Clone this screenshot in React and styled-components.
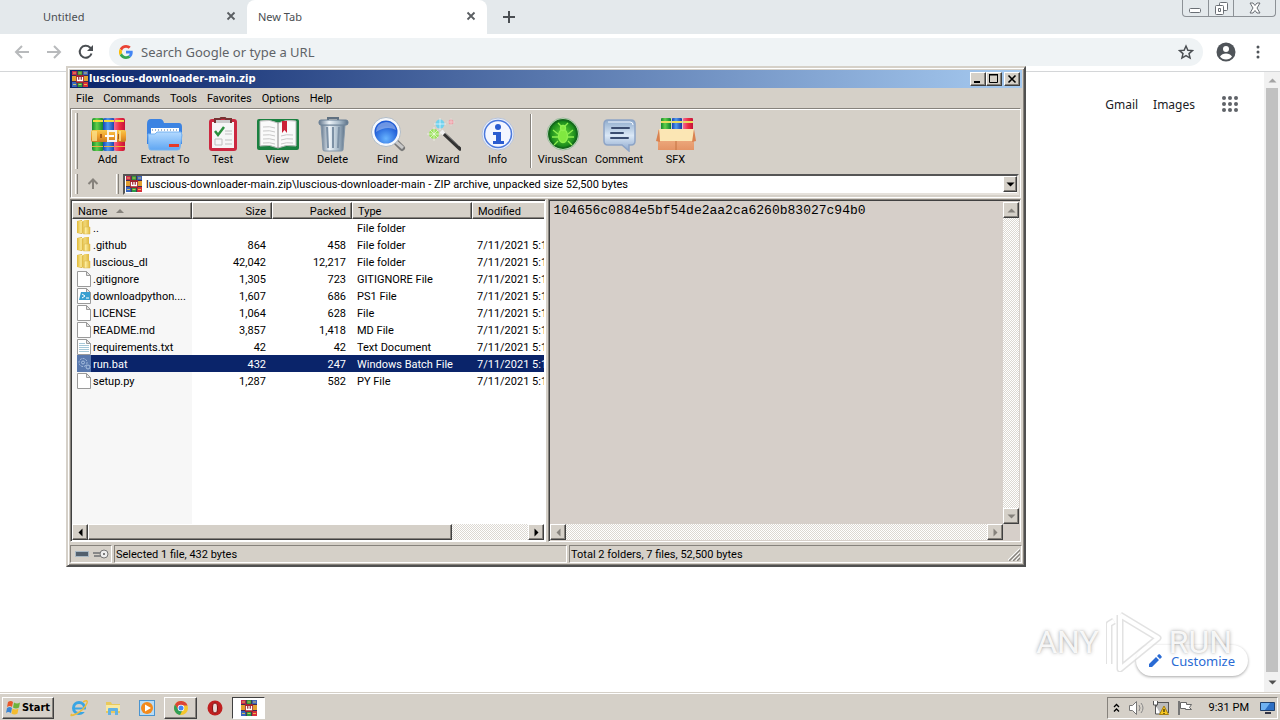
import React from "react";
import styled, { createGlobalStyle, css } from "styled-components";

const FACE = "#d5d0c8";
const UI = `Roboto, "Liberation Sans", sans-serif`;
const WEB = `"Noto Sans", "Open Sans", sans-serif`;
const BOLD = `"DejaVu Sans Condensed", Roboto, sans-serif`;

const GlobalStyle = createGlobalStyle`
  * { box-sizing: border-box; }
  html, body, #root { height: 100%; }
  body { margin: 0; overflow: hidden; background: #fff; font-family: ${UI}; font-size: 11px; color: #000; }
  button { margin: 0; padding: 0; border: 0; background: none; font: inherit; color: inherit; display: flex; align-items: center; justify-content: center; }
  svg { display: block; flex: none; }
`;

const raised = css`
  background: ${FACE};
  border: 1px solid;
  border-color: #fff #404040 #404040 #fff;
  box-shadow: inset -1px -1px 0 #86827c;
`;
const sunken = css`
  border: 1px solid;
  border-color: #86827c #fff #fff #86827c;
`;

const Screen = styled.div`
  position: relative;
  display: flex;
  flex-direction: column;
  height: 100%;
  min-height: 600px;
`;

/* ---------- browser ---------- */
const TabStrip = styled.header`
  display: flex;
  height: 34px;
  background: #e4e9ec;
`;
const Tab = styled.div`
  display: flex;
  align-items: center;
  justify-content: space-between;
  width: ${(p) => (p.$active ? 240 : 247)}px;
  padding: 0 11px 2px ${(p) => (p.$active ? 11 : 43)}px;
  border-radius: 8px 8px 0 0;
  background: ${(p) => (p.$active ? "#fff" : "transparent")};
  font-family: ${WEB};
  font-size: 11px;
  color: #4a4e52;
`;
const NewTab = styled.button`
  width: 44px;
`;
const Caption = styled.div`
  display: flex;
  align-self: flex-start;
  height: 17px;
  margin: 0 4px 0 auto;
  border: 1px solid #8c9196;
  border-top: 0;
  border-radius: 0 0 4px 4px;
`;
const CaptionButton = styled.button`
  width: ${(p) => (p.$wide ? 42 : 25)}px;
  & + & { border-left: 1px solid #8c9196; }
`;
const BrowserBar = styled.div`
  display: flex;
  align-items: center;
  height: 38px;
  padding: 0 12px 2px 6px;
  border-bottom: 1px solid #d4d6d8;
`;
const NavButton = styled.button`
  width: 32px;
  height: 28px;
  margin-right: ${(p) => (p.$last ? 7 : 0)}px;
`;
const Omnibox = styled.label`
  display: flex;
  flex: 1;
  align-items: center;
  height: 28px;
  padding: 0 9px 0 10px;
  border-radius: 14px;
  background: #eff3f5;
`;
const OmniInput = styled.input`
  flex: 1;
  height: 24px;
  padding: 0 8px;
  border: 0;
  outline: 0;
  background: none;
  font-family: ${WEB};
  font-size: 13px;
  &::placeholder { color: #5f6368; opacity: 1; }
`;
const BarAction = styled.button`
  width: ${(p) => (p.$slim ? 20 : 45)}px;
  height: 28px;
`;
const Page = styled.main`
  display: flex;
  flex: 1;
  justify-content: flex-end;
  min-height: 0;
`;
const PageLinks = styled.nav`
  display: flex;
  align-items: center;
  gap: 15px;
  height: 40px;
  margin: 12px 25px 0 0;
  font-family: ${WEB};
  font-size: 12px;
  a { color: #202124; text-decoration: none; }
  button { margin-left: 11px; }
`;
const PageScroll = styled.div`
  display: flex;
  flex-direction: column;
  width: 16px;
  background: #f1f1f1;
`;
const PageScrollButton = styled.button`
  height: 16px;
  margin-bottom: ${(p) => (p.$end ? 2 : 0)}px;
`;
const PageThumb = styled.div`
  flex: 1;
  margin: 0 2px 2px;
  background: #c1c1c1;
`;
const Customize = styled.button`
  position: absolute;
  right: 32px;
  bottom: 44px;
  gap: 9px;
  width: 112px;
  height: 31px;
  border-radius: 16px;
  background: #fff;
  box-shadow: 0 1px 3px rgba(0, 0, 0, 0.35);
  color: #2a6bd4;
  font-family: ${WEB};
  font-size: 13px;
`;
const Watermark = styled.div`
  position: absolute;
  right: 48px;
  bottom: 48px;
  display: flex;
  align-items: center;
  gap: 7px;
  pointer-events: none;
  font-family: Roboto, sans-serif;
  font-size: 32px;
  line-height: 60px;
  color: rgba(255, 255, 255, 0.9);
  text-shadow: 0 0 4px rgba(0, 0, 0, 0.3), 0 0 2px rgba(0, 0, 0, 0.15);
`;

/* ---------- archive window ---------- */
const Window = styled.section`
  position: absolute;
  top: 66px;
  left: 66px;
  bottom: 153px;
  width: 75%;
  display: flex;
  flex-direction: column;
  padding: 2px;
  background: ${FACE};
  border: 2px solid;
  border-color: #d5d0c8 #505050 #505050 #d5d0c8;
  box-shadow: inset 1px 1px 0 #fff, inset -1px -1px 0 #86827c;
`;
const TitleBar = styled.header`
  display: flex;
  align-items: center;
  height: 18px;
  padding: 0 2px;
  background: linear-gradient(90deg, #0a246a, #a6caf0);
  color: #fff;
`;
const Title = styled.h1`
  flex: 1;
  margin: 0 0 0 1px;
  font-family: ${BOLD};
  font-size: 11px;
  line-height: 18px;
  font-weight: 700;
`;
const TitleButton = styled.button`
  ${raised}
  width: 16px;
  height: 14px;
  margin-left: ${(p) => (p.$gap ? 2 : 0)}px;
`;
const MenuBar = styled.nav`
  display: flex;
  gap: 10px;
  height: 20px;
  padding: 2px 0 0 6px;
  line-height: 18px;
`;
const Tools = styled.div`
  display: flex;
  flex-direction: column;
  height: 90px;
  margin-right: 1px;
  border: 1px solid #fff;
  border-left-color: #86827c;
  border-top-color: #86827c;
  box-shadow: inset 1px 1px 0 #fff;
`;
const ToolRow = styled.div`
  display: flex;
  align-items: center;
  height: ${(p) => (p.$small ? 26 : 62)}px;
  padding: ${(p) => (p.$small ? "0 1px 0 4px" : "2px 0 0 4px")};
`;
const Grip = styled.i`
  width: 3px;
  height: ${(p) => (p.$small ? 20 : 56)}px;
  border-left: 1px solid #fff;
  border-right: 1px solid #86827c;
`;
const Divider = styled.i`
  width: 10px;
  height: 54px;
  background: linear-gradient(#86827c, #86827c) 5px 0 / 1px 100% no-repeat, linear-gradient(#fff, #fff) 6px 0 / 1px 100% no-repeat;
`;
const ToolButton = styled.button`
  flex-direction: column;
  width: ${(p) => p.$w || 55}px;
  line-height: 14px;
  white-space: nowrap;
  svg { margin-bottom: 1px; }
  ${Grip} + & { margin-left: 2px; }
`;
const UpButton = styled.button`
  width: 30px;
  height: 22px;
  margin-right: 8px;
`;
const Address = styled.label`
  display: flex;
  flex: 1;
  align-items: center;
  height: 21px;
  margin-left: 4px;
  padding: 0 0 0 1px;
  background: #fff;
  border: 2px solid;
  border-color: #555 #e6e2dc #e6e2dc #555;
  input { flex: 1; height: 17px; padding: 1px 4px 0; border: 0; outline: 0; font: inherit; background: none; }
`;
const DropButton = styled.button`
  ${raised}
  width: 14px;
  height: 16px;
`;
const Panes = styled.div`
  display: grid;
  grid-template-columns: minmax(0, 477fr) minmax(0, 473fr);
  gap: 2px;
  flex: 1;
  min-height: 0;
  margin: 1px 1px 0 0;
`;
const Pane = styled.div`
  display: flex;
  flex-direction: column;
  min-height: 0;
  overflow: hidden;
  border: 1px solid;
  border-color: #86827c #fff #fff #86827c;
  box-shadow: inset 1px 1px 0 #404040;
  padding: 2px 1px 1px;
  background: ${(p) => (p.$face ? "#d6cfc9" : "#fff")};
`;
const List = styled.div`
  flex: 1;
  min-height: 0;
  overflow: hidden;
  background: linear-gradient(90deg, #f7f7f7 120px, #fff 120px);
`;
const Table = styled.table`
  width: 520px;
  table-layout: fixed;
  border-collapse: separate;
  border-spacing: 0;
  th { ${raised} height: 17px; padding: 2px 5px 0; font-weight: 400; text-align: left; line-height: 13px; }
  td { height: 17px; padding: 2px 5px 0; line-height: 15px; white-space: nowrap; overflow: hidden; }
  th.num, td.num { text-align: right; }
  td.num { padding-right: 6px; }
  td:first-child { padding: 0 0 0 5px; }
`;
const Row = styled.tr`
  ${(p) => p.$selected && css`
    color: #fff;
    td { background: #0a246a; }
    td:first-child { background: #f7f7f7; }
  `}
`;
const NameCell = styled.div`
  display: flex;
  height: 17px;
  align-items: center;
  span { flex: 1; height: 17px; padding: 2px 0 0 2px; ${(p) => p.$selected && "background: #0a246a;"} }
`;
const SortMark = styled.svg`
  display: inline-block;
  margin-left: 9px;
  vertical-align: 2px;
`;
const PreviewBody = styled.div`
  display: flex;
  flex: 1;
  min-height: 0;
`;
const Preview = styled.pre`
  flex: 1;
  margin: 0;
  padding: 1px 3px;
  font: 13px/16px "Liberation Mono", monospace;
`;
const Bar = styled.div`
  display: flex;
  flex: none;
  justify-content: ${(p) => (p.$thumb ? "flex-start" : "space-between")};
  flex-direction: ${(p) => (p.$vertical ? "column" : "row")};
  height: ${(p) => (p.$vertical ? "auto" : "16px")};
  width: ${(p) => (p.$vertical ? "16px" : "auto")};
  margin-right: ${(p) => (p.$corner ? 16 : 0)}px;
  background: repeating-conic-gradient(#fff 0 25%, #dcd8d1 0 50%) 0 0 / 2px 2px;
  button:last-child { margin-left: ${(p) => (p.$thumb ? "auto" : "0")}; }
`;
const BarButton = styled.button`
  ${raised}
  width: 16px;
  height: 16px;
  color: ${(p) => (p.$off ? "#86827c" : "#000")};
`;
const BarThumb = styled.div`
  ${raised}
  width: 77%;
`;
const StatusBar = styled.footer`
  display: flex;
  gap: 2px;
  height: 21px;
  padding-top: 3px;
  line-height: 17px;
`;
const StatusCell = styled.div`
  ${sunken}
  display: flex;
  align-items: center;
  justify-content: ${(p) => (p.$end ? "space-between" : "flex-start")};
  gap: 2px;
  flex: ${(p) => p.$flex || "none"};
  padding: 0 1px;
`;

/* ---------- taskbar ---------- */
const Taskbar = styled.footer`
  display: flex;
  align-items: center;
  gap: 1px;
  height: 28px;
  padding: 2px 2px 0;
  background: ${FACE};
  border-top: 1px solid #d5d0c8;
  box-shadow: inset 0 1px 0 #fff;
`;
const Start = styled.button`
  ${raised}
  gap: 1px;
  width: 52px;
  height: 22px;
  margin-right: 7px;
  font-family: ${BOLD};
  font-size: 11px;
  font-weight: 700;
`;
const TaskButton = styled.button`
  width: 33px;
  height: 22px;
  ${(p) => p.$raised && raised}
  ${(p) => p.$pressed && css`background: #fff; border: 1px solid; border-color: #404040 #fff #fff #404040;`}
`;
const Tray = styled.div`
  ${sunken}
  display: flex;
  align-items: center;
  gap: 6px;
  height: 22px;
  margin-left: auto;
  padding: 0 1px 0 5px;
  svg:first-child { margin-right: 2px; }
  time { margin: 0 4px 0 9px; }
`;

/* ---------- drawings ---------- */
const Books = ({ size = 16 }) => (
  <svg width={size} height={size} viewBox="0 0 16 16">
    <path fill="#8e2c5c" d="M0 0h16v16H0z" />
    <path fill="#c8284c" d="M0 0h5v4H0z" /><path fill="#35963c" d="M5.500 0h5v4h-5z" /><path fill="#e02c34" d="M11 0h5v4h-5z" />
    <path fill="#e2a030" d="M0 5h4v5H0zM12 5h4v5h-4z" />
    <path fill="#2e6cc8" d="M0 11h5v5H0zM11 0h5v4h-5z" opacity=".9" /><path fill="#2a9a44" d="M5.500 11h5v5h-5z" /><path fill="#d83038" d="M11 11h5v5h-5z" />
    <path fill="#a0242e" d="M4 4h8v8H4z" />
    <path stroke="#fff" strokeWidth="1.300" fill="none" d="M5.500 6v3.500h5V6M8 6v3.500" />
    <path stroke="#2a2a50" strokeWidth=".8" fill="none" d="M5.200 0v4M10.700 0v4M5.200 12v4M10.700 12v4M0 4.500h4M12 4.500h4M0 10.500h4M12 10.500h4" />
    <path stroke="#f3d552" strokeWidth=".8" d="M1 2h3M6.500 2h3M12 2h3M1 13.500h3M6.500 13.500h3M12 13.500h3" />
  </svg>
);

const Defs = () => (
  <svg width="0" height="0" style={{ position: "absolute" }} aria-hidden="true">
    <defs>
      <linearGradient id="red"><stop stopColor="#f06a9a" /><stop offset=".5" stopColor="#ee2d40" /><stop offset="1" stopColor="#c4123a" /></linearGradient>
      <linearGradient id="green"><stop stopColor="#128a2c" /><stop offset=".4" stopColor="#63cf4a" /><stop offset="1" stopColor="#078030" /></linearGradient>
      <linearGradient id="blue"><stop stopColor="#1742b4" /><stop offset=".4" stopColor="#4f9aee" /><stop offset="1" stopColor="#1638a4" /></linearGradient>
      <linearGradient id="gold" x2="0" y2="1"><stop stopColor="#f8c94c" /><stop offset=".5" stopColor="#f0a02c" /><stop offset="1" stopColor="#c87a20" /></linearGradient>
      <linearGradient id="sky" x2="0" y2="1"><stop stopColor="#b4daff" /><stop offset="1" stopColor="#5fa6f2" /></linearGradient>
      <linearGradient id="steel"><stop stopColor="#64788e" /><stop offset=".35" stopColor="#eef4f9" /><stop offset=".7" stopColor="#a9bbca" /><stop offset="1" stopColor="#5d7288" /></linearGradient>
      <radialGradient id="lens" cy=".75"><stop stopColor="#68b4ff" /><stop offset="1" stopColor="#1f5cd6" /></radialGradient>
      <radialGradient id="virus"><stop stopColor="#69dd38" /><stop offset="1" stopColor="#108018" /></radialGradient>
      <linearGradient id="note" x2="0" y2="1"><stop stopColor="#8faccd" /><stop offset=".5" stopColor="#dbe8f6" /><stop offset="1" stopColor="#8ba7cd" /></linearGradient>
      <linearGradient id="box" x2="0" y2="1"><stop stopColor="#f4bb92" /><stop offset="1" stopColor="#e49466" /></linearGradient>
      <linearGradient id="folder"><stop stopColor="#e0b938" /><stop offset=".4" stopColor="#fff0a0" /><stop offset="1" stopColor="#dfb840" /></linearGradient>
    </defs>
  </svg>
);

const Pic = ({ children, w = 36 }) => <svg width={w} height="36" viewBox={`0 0 ${w} 36`}>{children}</svg>;

const pics = {
  Add: <Pic>
    <rect x="2" y="2" width="12" height="33" rx="2" fill="url(#green)" />
    <rect x="13" y="2" width="12" height="33" rx="2" fill="url(#blue)" />
    <rect x="24" y="2" width="11" height="33" rx="2" fill="url(#red)" />
    <path fill="#f6dc40" d="M3 4h10v2H3zM14 4h10v2H14zM25 4h9v2h-9z" />
    <path fill="#e8b040" d="M2 30h11v1H2zM14 30h10v1H14zM25 30h10v1H25z" />
    <rect x="1" y="14" width="35" height="12" rx="2" fill="url(#gold)" />
    <path fill="#fbe08a" d="M2 15h5v10H2zM29 15h2v10h-2z" opacity=".8" />
    <path fill="none" stroke="#f8f4ec" strokeWidth="2" d="M18 15h8v10h-8z" /><path stroke="#fff" strokeWidth="2" d="M15 20h9" />
    <path fill="#a65a18" d="M10 18h2v4h-2zM28 18h1v5h-1z" />
  </Pic>,
  "Extract To": <Pic>
    <path fill="#3c83e2" d="M0 8q0-5 4-5h9q3 0 4 4h15q3 0 3 4v17H0z" />
    <path fill="#fff" d="M4 12h28v14H4z" /><path stroke="#9fb6d0" strokeWidth="2" strokeDasharray="1 2" d="M5 14h27" />
    <path fill="url(#sky)" stroke="#74b2f2" d="M1 18h7l2-2h24l1 3-2 13q0 2-3 2H4q-2 0-2-2z" />
    <rect x="22" y="28" width="10" height="3" fill="#e63a28" />
  </Pic>,
  Test: <Pic>
    <rect x="4" y="3" width="28" height="32" rx="3" fill="#cc2840" /><path fill="#f6f6f6" d="M7 6h22v26H7z" />
    <path fill="none" stroke="#733" strokeWidth="2" d="M10 6V3h5l1-1h4l1 1h5v3z" /><path fill="#ccc" d="M11 4h14v3H11z" />
    <path fill="none" stroke="#2b8f3d" strokeWidth="2.500" d="m10 15 3 4 6-8" />
    <path fill="none" stroke="#c0c0c0" d="M10 23h7v6h-7zM20 15h7M20 18h7M20 24h7M20 28h7" />
  </Pic>,
  View: <Pic w={44}>
    <rect x="1" y="3" width="42" height="31" rx="2" fill="#1a8040" />
    <path fill="#fafafa" stroke="#bbb" d="M4 5q10-2 18 2 8-4 18-2v25q-10-2-18 2-8-4-18-2z" />
    <path stroke="#888" d="M22 7v25" /><path fill="none" stroke="#c8c8c8" d="M7 11q7-1 12 1M7 15q7-1 12 1M7 19q7-1 12 1M7 23q7-1 12 1M7 27q7-1 12 1M25 20q5-2 12-1M25 24q5-2 12-1M25 28q5-2 12-1" />
    <path fill="#cc2036" d="M26 5h5v12l-2.500-3-2.500 3z" />
  </Pic>,
  Delete: <Pic>
    <path fill="none" stroke="#607080" strokeWidth="2" d="M13 4V2h10v2" />
    <path fill="url(#steel)" stroke="#8496a8" d="M6 9h24l-2 25q0 1-2 1H10q-2 0-2-1z" />
    <rect x="4" y="4" width="29" height="5" rx="2" fill="url(#steel)" stroke="#6b8096" />
    <path stroke="#7d91a6" strokeWidth="2" d="M12 11l1 21M18 11v21M24 11l-1 21" />
  </Pic>,
  Find: <Pic>
    <path stroke="#777" strokeWidth="6" strokeLinecap="round" d="m27 27 5 5" /><path stroke="#c8c8c8" strokeWidth="3" d="m25 25 8 7" />
    <circle cx="16" cy="16" r="13" fill="url(#lens)" stroke="#f6f8fc" strokeWidth="3" />
    <circle cx="16" cy="16" r="14.500" fill="none" stroke="#9ab" strokeWidth=".7" />
    <path fill="#fff" opacity=".35" d="M6 16q0-9 10-10 8 0 10 8-9-5-20 2z" />
  </Pic>,
  Wizard: <Pic>
    <path stroke="#333" strokeWidth="3.500" strokeLinecap="round" d="m18 17 17 16" /><path stroke="#eee" strokeWidth="4" d="m16 15 3 3" />
    <path stroke="#888" d="m20 17 14 13" />
    <g stroke="#f4fae8"><circle cx="9" cy="18" r="5" fill="#9be25c" stroke="none" /><path strokeWidth=".7" d="M9 11v14M2 18h14M5 14l8 8M13 14l-8 8" /></g>
    <g stroke="#f0faff"><circle cx="15" cy="8" r="4.500" fill="#70d2ee" stroke="none" /><path strokeWidth=".7" d="M15 2v12M9 8h12" /></g>
    <g stroke="#f0d8d8"><circle cx="26" cy="6" r="2.500" fill="#f09aa4" stroke="none" /><path strokeWidth=".7" d="M26 2v8M22 6h8" /></g>
  </Pic>,
  Info: <Pic>
    <circle cx="18" cy="18" r="16" fill="#e8eefa" stroke="#b8c4dc" /><circle cx="18" cy="18" r="13.500" fill="#f3f6ff" stroke="#4a78dc" strokeWidth="1.500" />
    <circle cx="18" cy="11" r="3" fill="#2a5cd0" /><path fill="#2a5cd0" d="M13 16h8v9h3v3H13v-3h3v-6h-3z" />
  </Pic>,
  VirusScan: <Pic>
    <circle cx="18" cy="18" r="16" fill="#d8f0d4" stroke="#9ab89a" /><circle cx="18" cy="18" r="14" fill="url(#virus)" stroke="#15691c" strokeWidth="2" />
    <g fill="none" stroke="#8ff050" strokeWidth="1.300"><ellipse cx="18" cy="20" rx="4.500" ry="6.500" fill="#80e840" /><circle cx="18" cy="12" r="2.500" fill="#80e840" /><path d="m13 18-5-4M13 21H7M13 25l-4 4M23 18l5-4M23 21h6M23 25l4 4M16 10l-3-3M20 10l3-3" /></g>
  </Pic>,
  Comment: <Pic>
    <path fill="url(#note)" stroke="#8da4c6" strokeWidth="1.500" d="M7 4h23q4 0 4 4v17q0 4-4 4h-2v6l-7-6H7q-4 0-4-4V8q0-4 4-4z" />
    <path fill="none" stroke="#f4f8ff" d="M7 6h22q3 0 3 3" /><path stroke="#3b4d70" strokeWidth="2" strokeLinecap="round" d="M11 12h17M10 17h12M10 22h17" />
  </Pic>,
  SFX: <Pic w={40}>
    <rect x="5" y="2" width="10" height="16" rx="1" fill="url(#green)" /><rect x="16" y="2" width="10" height="16" rx="1" fill="url(#blue)" /><rect x="27" y="2" width="10" height="16" rx="1" fill="url(#red)" />
    <path fill="#e9dc60" d="M5 5h10v2H5zM16 5h10v2H16zM27 5h10v2H27z" />
    <path fill="url(#box)" d="M2 14h36v20H2z" /><path fill="#fbe6b4" d="M3 13h35l-1 12H4z" />
    <path fill="#d98250" d="m3 13-3 12 4 1zM38 13l2 12-4 1z" /><path stroke="#c47240" d="M20 25v9" />
  </Pic>,
};

const folder = (
  <svg width="14" height="16" viewBox="0 0 14 16">
    <path fill="#d9b23c" d="M0 1l5-1v14l-5-1z" /><path fill="url(#folder)" d="M0 1h6v12H0zM7 0h5v9H7z" /><path fill="url(#folder)" stroke="#d9b54c" strokeWidth=".5" d="m5 2 2-1v13l-2-1zM7 7h6v7H7z" />
  </svg>
);
const Doc = ({ kind }) => (
  <svg width="14" height="16" viewBox="0 0 14 16">
    <path fill="#fff" stroke="#9a9a9a" d="M.5.500h9l4 4v11H.5z" /><path fill="#e4e4e4" stroke="#9a9a9a" d="M9.500.5v4h4z" />
    {kind === "text" && <path stroke="#a6c8d8" d="M2 4.500h6M2 6.500h10M2 8.500h10M2 10.500h10M2 12.500h10" />}
    {kind === "ps" && <><path fill="#3aa0d0" d="M4 4h9v8H2z" /><path fill="none" stroke="#fff" d="m5 6 3 2-3 2M9 10h3" /></>}
  </svg>
);
const gear = (
  <svg width="14" height="17" viewBox="0 0 14 17">
    <path fill="#5878ae" d="M0 0h14v17H0z" /><circle cx="6" cy="7.500" r="4" fill="none" stroke="#a9c0e0" strokeDasharray="2 1" /><circle cx="6" cy="7.500" r="1.500" fill="none" stroke="#a9c0e0" /><circle cx="11" cy="12" r="2" fill="none" stroke="#a9c0e0" />
  </svg>
);

const Arrow = ({ dir = "down", fill = "currentColor" }) => {
  const turn = { down: 0, left: 90, up: 180, right: 270 }[dir];
  return <svg width="9" height="9" viewBox="0 0 9 9"><path fill={fill} d="M.5 2.500h8L4.500 6.500z" transform={`rotate(${turn} 4.500 4.500)`} /></svg>;
};
const Cross = () => (
  <svg width="10" height="10" viewBox="0 0 10 10"><path stroke="#5a5e62" strokeWidth="1.800" d="m1.500 1.500 7 7M8.500 1.500l-7 7" /></svg>
);
const GoogleG = () => (
  <svg width="14" height="14" viewBox="0 0 48 48">
    <path fill="#EA4335" d="M24 9.500c3.500 0 6.700 1.200 9.200 3.600l6.900-6.900C35.900 2.400 30.500 0 24 0 14.600 0 6.500 5.400 2.600 13.200l8 6.200C12.400 13.700 17.700 9.500 24 9.500z" />
    <path fill="#4285F4" d="M47 24.600c0-1.600-.2-3.100-.4-4.600H24v9h12.900c-.6 3-2.300 5.500-4.800 7.200l7.700 6C44.400 38 47 31.800 47 24.600z" />
    <path fill="#FBBC05" d="M10.500 28.600a14.500 14.500 0 0 1 0-9.200l-8-6.200a24 24 0 0 0 0 21.600z" />
    <path fill="#34A853" d="M24 48c6.500 0 11.900-2.100 15.900-5.800l-7.700-6c-2.200 1.500-4.900 2.300-8.200 2.300-6.300 0-11.600-4.200-13.500-9.900l-8 6.200C6.500 42.600 14.600 48 24 48z" />
  </svg>
);

const files = [
  ["..", "", "", "File folder", "", folder],
  [".github", "864", "458", "File folder", 1, folder],
  ["luscious_dl", "42,042", "12,217", "File folder", 1, folder],
  [".gitignore", "1,305", "723", "GITIGNORE File", 1, <Doc />],
  ["downloadpython....", "1,607", "686", "PS1 File", 1, <Doc kind="ps" />],
  ["LICENSE", "1,064", "628", "File", 1, <Doc />],
  ["README.md", "3,857", "1,418", "MD File", 1, <Doc />],
  ["requirements.txt", "42", "42", "Text Document", 1, <Doc kind="text" />],
  ["run.bat", "432", "247", "Windows Batch File", 1, gear],
  ["setup.py", "1,287", "582", "PY File", 1, <Doc />],
];
const widths = { "Extract To": 60, Comment: 58 };
const tool = (name) => <ToolButton key={name} $w={widths[name]}>{pics[name]}{name}</ToolButton>;

function Browser() {
  return (
    <>
      <TabStrip>
        <Tab>Untitled<button aria-label="Close Untitled"><Cross /></button></Tab>
        <Tab $active>New Tab<button aria-label="Close New Tab"><Cross /></button></Tab>
        <NewTab aria-label="New tab"><svg width="12" height="12"><path stroke="#4a4e52" strokeWidth="2" d="M6 0v12M0 6h12" /></svg></NewTab>
        <Caption>
          <CaptionButton aria-label="Minimize"><svg width="13" height="13"><rect x=".5" y="6.500" width="11" height="4" rx="1" fill="#fff" stroke="#6a6f75" /></svg></CaptionButton>
          <CaptionButton aria-label="Restore"><svg width="13" height="13" fill="#fff" stroke="#6a6f75"><rect x="4.500" y=".5" width="8" height="8" rx="1" /><rect x=".5" y="3.500" width="8" height="9" rx="1" /><path d="M3.500 6.500h2v3h-2z" /></svg></CaptionButton>
          <CaptionButton $wide aria-label="Close"><svg width="12" height="12"><path fill="#fff" stroke="#6a6f75" d="M1 1h3l2 2.500L8 1h3L8 6l3 5H8L6 8.500 4 11H1l3-5z" /></svg></CaptionButton>
        </Caption>
      </TabStrip>
      <BrowserBar>
        <NavButton aria-label="Back"><svg width="16" height="14" fill="none" stroke="#b8babc" strokeWidth="2"><path d="M15 7H2M8 1 2 7l6 6" /></svg></NavButton>
        <NavButton aria-label="Forward"><svg width="16" height="14" fill="none" stroke="#b8babc" strokeWidth="2"><path d="M1 7h13M8 1l6 6-6 6" /></svg></NavButton>
        <NavButton $last aria-label="Reload"><svg width="16" height="16" fill="none" stroke="#4a4e52" strokeWidth="2"><path d="M13.500 9.500A6 6 0 1 1 12 3.500l2 2" /><path fill="#4a4e52" stroke="none" d="M15 1v6H9z" /></svg></NavButton>
        <Omnibox>
          <GoogleG />
          <OmniInput placeholder="Search Google or type a URL" aria-label="Address and search" />
          <button aria-label="Bookmark"><svg width="16" height="16" viewBox="0 0 24 24" fill="none" stroke="#4a4e52" strokeWidth="2.200"><path d="m12 3 2.800 6.300 6.900.6-5.200 4.500 1.600 6.700L12 17.500l-6.100 3.600 1.600-6.700-5.200-4.500 6.900-.6z" /></svg></button>
        </Omnibox>
        <BarAction aria-label="Profile"><svg width="20" height="20"><circle cx="10" cy="10" r="9.500" fill="#4f5459" /><circle cx="10" cy="7" r="3" fill="#fff" /><path fill="#fff" d="M4 14.500q2-3 6-3t6 3q-2 3-6 3t-6-3z" /></svg></BarAction>
        <BarAction $slim aria-label="Browser menu"><svg width="4" height="14" fill="#4f5459"><circle cx="2" cy="2" r="1.500" /><circle cx="2" cy="7" r="1.500" /><circle cx="2" cy="12" r="1.500" /></svg></BarAction>
      </BrowserBar>
      <Page>
        <PageLinks>
          <a href="#gmail">Gmail</a>
          <a href="#images">Images</a>
          <button aria-label="Google apps"><svg width="18" height="18" fill="#5f6368">{[3, 9, 15].map((y) => [3, 9, 15].map((x) => <circle key={x + "-" + y} cx={x} cy={y} r="2" />))}</svg></button>
        </PageLinks>
        <PageScroll>
          <PageScrollButton aria-label="Scroll up"><Arrow dir="up" fill="#a3a3a3" /></PageScrollButton>
          <PageThumb />
          <PageScrollButton $end aria-label="Scroll down"><Arrow fill="#505050" /></PageScrollButton>
        </PageScroll>
      </Page>
    </>
  );
}

function ArchiveWindow() {
  return (
    <Window>
      <TitleBar>
        <Books />
        <Title>luscious-downloader-main.zip</Title>
        <TitleButton aria-label="Minimize window"><svg width="10" height="10"><path fill="#000" d="M1 7h6v2H1z" /></svg></TitleButton>
        <TitleButton aria-label="Maximize window"><svg width="10" height="10"><path fill="none" stroke="#000" d="M.5 1v7.500h8V1M0 1h9M0 0.500h9" /></svg></TitleButton>
        <TitleButton $gap aria-label="Close window"><svg width="10" height="10"><path stroke="#000" strokeWidth="1.600" d="m1.500 1.500 7 7M8.500 1.500l-7 7" /></svg></TitleButton>
      </TitleBar>
      <MenuBar>
        {["File", "Commands", "Tools", "Favorites", "Options", "Help"].map((m) => <button key={m}>{m}</button>)}
      </MenuBar>
      <Tools>
        <ToolRow>
          <Grip />
          {["Add", "Extract To", "Test", "View", "Delete", "Find", "Wizard", "Info"].map(tool)}
          <Divider />
          {["VirusScan", "Comment", "SFX"].map(tool)}
        </ToolRow>
        <ToolRow $small>
          <Grip $small />
          <UpButton aria-label="Up one level"><svg width="12" height="12" fill="none" stroke="#86827c" strokeWidth="2"><path d="M6 11V2M1.500 6 6 1.500 10.500 6" /></svg></UpButton>
          <Grip $small />
          <Address>
            <Books />
            <input aria-label="Archive path" defaultValue={"luscious-downloader-main.zip\\luscious-downloader-main - ZIP archive, unpacked size 52,500 bytes"} />
            <DropButton aria-label="Show paths"><Arrow /></DropButton>
          </Address>
        </ToolRow>
      </Tools>
      <Panes>
        <Pane>
          <List>
            <Table>
              <colgroup><col width="120" /><col width="80" /><col width="80" /><col width="120" /><col width="120" /></colgroup>
              <thead>
                <tr>
                  <th>Name<SortMark width="8" height="4"><path fill="#86827c" d="M0 4h8L4 0z" /></SortMark></th>
                  <th className="num">Size</th><th className="num">Packed</th><th>Type</th><th>Modified</th>
                </tr>
              </thead>
              <tbody>
                {files.map(([name, size, packed, type, dated, icon]) => {
                  const selected = name === "run.bat";
                  return (
                    <Row key={name} $selected={selected}>
                      <td><NameCell $selected={selected}>{icon}<span>{name}</span></NameCell></td>
                      <td className="num">{size}</td><td className="num">{packed}</td><td>{type}</td>
                      <td>{dated ? "7/11/2021 5:1" : ""}</td>
                    </Row>
                  );
                })}
              </tbody>
            </Table>
          </List>
          <Bar $thumb>
            <BarButton aria-label="Scroll left"><Arrow dir="left" /></BarButton>
            <BarThumb />
            <BarButton aria-label="Scroll right"><Arrow dir="right" /></BarButton>
          </Bar>
        </Pane>
        <Pane $face>
          <PreviewBody>
            <Preview>104656c0884e5bf54de2aa2ca6260b83027c94b0</Preview>
            <Bar $vertical>
              <BarButton $off aria-label="Comment up"><Arrow dir="up" /></BarButton>
              <BarButton $off aria-label="Comment down"><Arrow /></BarButton>
            </Bar>
          </PreviewBody>
          <Bar $corner>
            <BarButton $off aria-label="Comment left"><Arrow dir="left" /></BarButton>
            <BarButton $off aria-label="Comment right"><Arrow dir="right" /></BarButton>
          </Bar>
        </Pane>
      </Panes>
      <StatusBar>
        <StatusCell>
          <svg width="38" height="14"><rect x="3.500" y="4.500" width="13" height="5" fill="#52606e" stroke="#a8b8c4" /><path fill="none" stroke="#888" strokeWidth="2" d="M21 6h9M22 9h8" /><circle cx="32" cy="7" r="4" fill="#eee" stroke="#777" /><circle cx="32" cy="7" r="1" fill="#555" /></svg>
        </StatusCell>
        <StatusCell $flex="1 1 0">Selected 1 file, 432 bytes</StatusCell>
        <StatusCell $flex="1 1 0" $end>Total 2 folders, 7 files, 52,500 bytes
          <svg width="12" height="14" strokeWidth="2"><path stroke="#fff" d="m0 14 12-12M4 14l8-8M8 14l4-4" /><path stroke="#86827c" d="m1 14 12-12M5 14l8-8M9 14l4-4" strokeWidth="1.500" /></svg>
        </StatusCell>
      </StatusBar>
    </Window>
  );
}

function TaskbarArea() {
  return (
    <Taskbar>
      <Start><svg width="15" height="15" viewBox="0 0 15 15"><path fill="#e8582a" d="M2 2q3-2 5 0L6 7Q4 5 1 7z" /><path fill="#6db33c" d="M8 2.500q3 2 6 0l-1 5q-3 2-6 0z" /><path fill="#3b86d4" d="M1 8q3-2 5 0l-1 5q-3-2-5 0z" /><path fill="#f4bc30" d="M6.500 8.500q3 2 6 0l-1 5q-3 2-6 0z" /></svg>Start</Start>
      <TaskButton aria-label="Internet Explorer"><svg width="18" height="18"><circle cx="9" cy="9" r="5.500" fill="none" stroke="#3aa5e4" strokeWidth="3" /><path stroke="#3aa5e4" strokeWidth="2" d="M4 9.500h11" /><path fill={FACE} d="M11 10.500h6v2.500h-6z" /><path fill="none" stroke="#eebc3a" strokeWidth="1.500" d="M2 15q-3 3 4 0 8-4 11-11 1-4-4-1" /></svg></TaskButton>
      <TaskButton aria-label="Explorer"><svg width="16" height="16"><path fill="#e9c95c" d="M1 2h5l1 2h8v9H1z" /><path fill="#f9e9a0" d="M1 5h14v6H1z" /><path fill="#62b2e4" d="M3 15V9q0-1 1-1h8q1 0 1 1v6h-3v-4H6v4z" /></svg></TaskButton>
      <TaskButton aria-label="Media player"><svg width="16" height="16"><rect x=".5" y=".5" width="15" height="15" fill="#b8dcf6" stroke="#4a94d0" /><circle cx="8" cy="8" r="6" fill="#f38a1c" /><path fill="#fff" d="m6 4.500 6 3.500-6 3.500z" /></svg></TaskButton>
      <TaskButton $raised aria-label="Chrome"><svg width="14" height="14"><circle cx="7" cy="7" r="7" fill="#f5c62c" /><path fill="#dc4437" d="M1 3.500a7 7 0 0 1 12.500 1H7L4 9z" /><path fill="#2f9e56" d="M1 3.500 4.500 9 8 10l-2 4A7 7 0 0 1 1 3.500z" /><circle cx="7" cy="7" r="3.300" fill="#fff" /><circle cx="7" cy="7" r="2.500" fill="#4285f4" /></svg></TaskButton>
      <TaskButton aria-label="Opera"><svg width="16" height="16"><circle cx="8" cy="8" r="7.500" fill="#c02020" /><ellipse cx="8" cy="8" rx="2.500" ry="5" fill="#e8dcd8" stroke="#801010" /></svg></TaskButton>
      <TaskButton $pressed aria-label="Archive manager"><Books /></TaskButton>
      <Tray>
        <svg width="7" height="10" fill="none" stroke="#000" strokeWidth="1.300"><path d="m1 4 2.500-2.500L6 4M1 8.500 3.500 6 6 8.500" /></svg>
        <svg width="18" height="16"><path fill="#fff" stroke="#777" d="M1.500 5.500h3l4-4v13l-4-4h-3z" /><path fill="none" stroke="#888" d="M11 5q2 3 0 6M13 3q4 5 0 10" /></svg>
        <svg width="18" height="16"><rect x="4.500" y="2.500" width="12" height="10" fill="#bbb" stroke="#555" /><path fill="#fff" stroke="#555" d="M1.500 1v4h4V1M3.500 5v9h5" /><path fill="#f8c820" stroke="#a88010" d="m12 6 4.500 8.500h-9z" /><path stroke="#000" d="M12 9v3M12 13v1" /></svg>
        <svg width="18" height="16"><path fill="#fff" stroke="#666" d="M4.500 2.500h6v2h5l-2 3 2 2h-6v-1h-5z" /><path stroke="#777" strokeWidth="2" d="M3 1v14" /></svg>
        <time>9:31 PM</time>
        <svg width="17" height="15"><path fill="#2d6fc4" stroke="#20406c" d="M1.500 2.500h14v8h-14z" /><path fill="#6fb1f0" d="M2 3h9L6 10H2z" /><path stroke="#334" strokeWidth="2" d="M6 13h6" /></svg>
      </Tray>
    </Taskbar>
  );
}

export default function App() {
  return (
    <Screen>
      <GlobalStyle />
      <Defs />
      <Browser />
      <Customize><svg width="13" height="13" fill="#2a6bd4"><path d="M0 13v-3l7-7 3 3-7 7zM8 2l2-2q1 0 3 3l-2 2z" /></svg>Customize</Customize>
      <Watermark>
        <span>ANY</span>
        <svg width="56" height="60" viewBox="0 0 56 60" fill="none" stroke="#dcdcdc" strokeWidth="7" strokeLinejoin="round" opacity=".8">
          <path d="M14 3 52 26 14 57V3M3 52V12l5-3" /><path stroke="#fff" strokeWidth="4" d="M14 3 52 26 14 57V3M3 52V12l5-3M21 20v22l18-13" />
        </svg>
        <span>RUN</span>
      </Watermark>
      <ArchiveWindow />
      <TaskbarArea />
    </Screen>
  );
}
